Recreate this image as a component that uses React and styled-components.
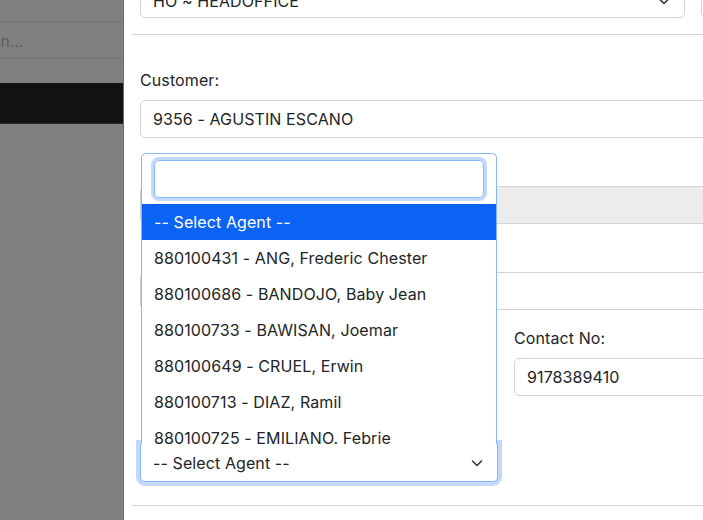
import React from 'react'
import styled, { createGlobalStyle } from 'styled-components'

const Reset = createGlobalStyle`
  html, body {
    margin: 0;
    padding: 0;
    overflow: hidden;
    background: #fff;
  }
  body {
    font-family: 'Inter', 'Noto Sans', sans-serif;
    font-size: 16px;
    line-height: 24px;
    letter-spacing: 0.1px;
    color: #212529;
  }
  * { box-sizing: border-box; }
`

const Page = styled.div`
  display: flex;
  width: 703px;
  height: 520px;
  overflow: hidden;
`

// sidebar behind the modal backdrop
const Sidebar = styled.aside`
  flex: 0 0 124px;
  background: #808080;
  border-right: 1px solid #6b6b6b;
  display: flex;
  flex-direction: column;
  padding-top: 21px;
`
const SideSearch = styled.div`
  height: 38px;
  padding-top: 3px;
  border-top: 1px solid #727272;
  border-bottom: 1px solid #727272;
  display: flex;
  align-items: center;
`
const SideSearchText = styled.div`
  width: 23px;
  overflow: hidden;
  display: flex;
  justify-content: flex-end;
  white-space: nowrap;
  color: #5a5a5a;
  font-size: 15px;
`
const SideItem = styled.div`
  margin-top: 24px;
  height: 41px;
  background: #111214;
  border-bottom: 1px solid #2a2b2d;
`

const Modal = styled.section`
  flex: 0 0 764px;
  background: #fff;
  padding: 0 8px;
`
const Section = styled.div`
  padding: ${p => p.$pad || '0 8px'};
  margin-top: ${p => p.$top || 0}px;
  border-bottom: 1px solid #d5d8db;
  height: ${p => p.$h ? `${p.$h}px` : 'auto'};
`
const Row = styled.div`
  display: grid;
  grid-template-columns: ${p => p.$cols || '1fr'};
  column-gap: 16px;
  align-items: start;
`
const Group = styled.div`
  margin-bottom: 16px;
  padding-top: ${p => p.$offset || 0}px;
  position: relative;
`
const Label = styled.label`
  display: block;
  height: 24px;
  margin-bottom: 8px;
  line-height: 24px;
`
const Input = styled.div`
  height: 38px;
  padding: 0 12px;
  display: flex;
  align-items: center;
  border: 1px solid #ced4da;
  border-radius: 5px;
  background: ${p => p.$disabled ? '#ececec' : '#fff'};
  white-space: nowrap;
  overflow: hidden;
`
const Select = styled(Input)`
  justify-content: space-between;
  padding-top: 4px;
`
const Chevron = () => (
  <svg width="16" height="16" viewBox="0 0 16 16" fill="none">
    <path d="M3.5 6l4.5 4.5L12.5 6" stroke="#343a40" strokeWidth="1.6" strokeLinecap="round" strokeLinejoin="round" />
  </svg>
)

const AgentControl = styled.div`
  position: relative;
  height: 38px;
  padding: 0 12px;
  display: flex;
  align-items: center;
  justify-content: space-between;
  border: 1px solid #86b7fe;
  border-top: none;
  border-radius: 0 0 5px 5px;
  background: #fff;
  box-shadow: 0 0 0 4px #c2d9fd;
`
const Popup = styled.div`
  position: absolute;
  left: 0;
  right: 0;
  bottom: 37px;
  height: 291px;
  background: #fff;
  border: 1px solid #86b7fe;
  border-bottom: none;
  border-radius: 5px 5px 0 0;
  overflow: hidden;
  z-index: 2;
`
const PopupSearch = styled.div`
  margin: 6px 12px 6px;
  height: 38px;
  border: 1px solid #86b7fe;
  border-radius: 5px;
  box-shadow: 0 0 0 3px #c2d9fd;
`
const Option = styled.div`
  height: 36px;
  padding: 0 12px;
  display: flex;
  align-items: center;
  white-space: nowrap;
  color: ${p => p.$active ? '#fff' : '#212529'};
  background: ${p => p.$active ? '#0b63f6' : 'transparent'};
`

const agents = [
  '880100431 - ANG, Frederic Chester',
  '880100686 - BANDOJO, Baby Jean',
  '880100733 - BAWISAN, Joemar',
  '880100649 - CRUEL, Erwin',
  '880100713 - DIAZ, Ramil',
  '880100725 - EMILIANO. Febrie',
]

export default function App() {
  return (
    <Page>
      <Reset />
      <Sidebar>
        <SideSearch>
          <SideSearchText>Search transaction...</SideSearchText>
        </SideSearch>
        <SideItem />
      </Sidebar>
      <Modal>
        <Section $pad="0 8px 16px" $top={-20}>
          <Row $cols="545px 1fr">
            <Select>
              HO ~ HEADOFFICE
              <Chevron />
            </Select>
            <Input />
          </Row>
        </Section>
        <Section $pad="33px 8px 0" $h={471}>
          <Group>
            <Label>Customer:</Label>
            <Input>9356 - AGUSTIN ESCANO</Input>
          </Group>
          {/* labels of these fields sit under the open agent list */}
          <Group>
            <Label />
            <Input $disabled />
          </Group>
          <Group>
            <Label />
            <Input />
          </Group>
          <Row $cols="1fr 1fr">
            <Group $offset={86}>
              <Label />
              <AgentControl>
                <Popup>
                  <PopupSearch />
                  <Option $active>-- Select Agent --</Option>
                  {agents.map(a => <Option key={a}>{a}</Option>)}
                </Popup>
                -- Select Agent --
                <Chevron />
              </AgentControl>
            </Group>
            <Group>
              <Label>Contact No:</Label>
              <Input>9178389410</Input>
            </Group>
          </Row>
        </Section>
      </Modal>
    </Page>
  )
}
